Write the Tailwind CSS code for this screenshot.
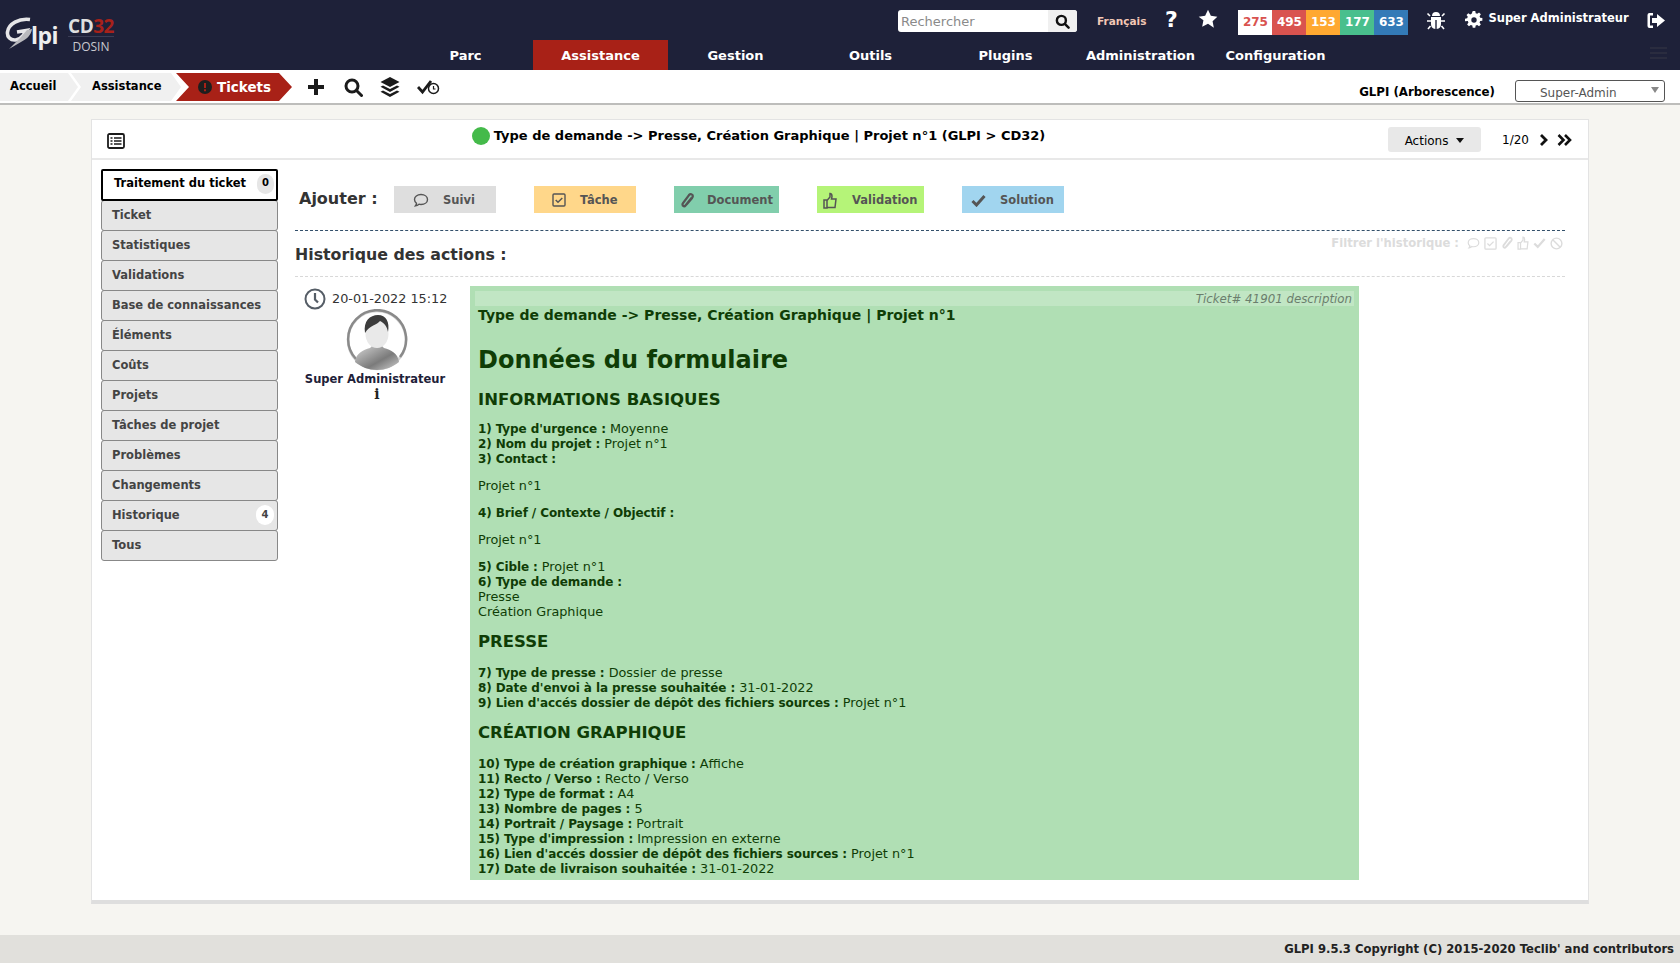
<!DOCTYPE html>
<html lang="fr">
<head>
    <meta charset="UTF-8">
    <title>Ticket - GLPI</title>
    <script src="https://cdn.jsdelivr.net/npm/@tailwindcss/browser@4"></script>
</head>
<body class="bg-[#f6f5f1] font-['DejaVu_Sans',sans-serif] text-[13px] text-black h-[963px] w-[1680px] overflow-hidden flex flex-col">

    <!-- top bar -->
    <header class="h-[70px] bg-[#1e2139] flex shrink-0 text-white">
        <div class="w-[398px] flex items-start pl-[5px] pt-[17px] gap-[10px]">
            <div class="relative w-[53px] h-[32px]">
                <svg class="absolute left-0 top-0" width="30" height="32" viewBox="0 0 30 32" fill="none"><path d="M25 2.500C14 1 3.500 7 2.500 15c-.6 5 3 8.500 8 8 3-.3 5.500-2 7.500-4.500l3.500-5-9.500 1.500" stroke="#e6e6e8" stroke-width="3.600"/><path d="M16 20l6-7 5-1c-1 6-5 10-11 13L4 32l7-7z" fill="#b9b9bd"/></svg>
                <span class="absolute left-[26px] top-[3px] text-[23px] leading-[30px] font-['Open_Sans',sans-serif] font-bold tracking-[-0.5px] text-[#eeeeee]">lpi</span>
            </div>
            <div class="w-[46px] text-center">
                <div class="text-[19px] leading-[18px] font-['Open_Sans',sans-serif] font-bold tracking-[-0.5px] border-b border-[#3a3d55] pb-[1px]"><span class="text-[#dfdfdf]">CD</span><span class="text-[#a8211a]">32</span></div>
                <div class="text-[12px] leading-[14px] mt-[3px] font-['Open_Sans',sans-serif] text-[#c9c9cf]">DOSIN</div>
            </div>
        </div>
        <div class="flex-1 flex flex-col">
            <div class="h-[40px] flex items-start pt-[10px] pl-[500px] relative">
                <div class="w-[179px] h-[22px] bg-white rounded-[3px] flex overflow-hidden">
                    <span class="flex-1 pl-[3px] text-[13px] leading-[24px] text-[#8a8a8a]">Rechercher</span>
                    <span class="w-[29px] bg-[#f0f0f0] flex items-center justify-center">
                        <svg width="15" height="15" viewBox="0 0 16 16" fill="none" stroke="#111" stroke-width="2.6"><circle cx="6.8" cy="6.8" r="4.8"/><path d="M10.5 10.500l4 4" stroke-linecap="round"/></svg>
                    </span>
                </div>
                <span class="ml-[20px] mt-[4px] text-[10.5px] leading-[14px] font-bold text-[#f3c7b5]">Français</span>
                <span class="ml-[18px] -mt-[3px] text-[22px] leading-[26px] font-bold w-[14px] text-center">?</span>
                <svg class="ml-[20px] -mt-[1px]" width="20" height="20" viewBox="0 0 24 24" fill="#fff"><path d="M12 1l3.400 7.200 7.800 1-5.700 5.400 1.500 7.800L12 17.600l-7 3.800 1.500-7.800L.8 9.200l7.800-1z"/></svg>
                <div class="ml-[20px] flex h-[25px] text-[12px] font-bold leading-[25px] text-center">
                    <span class="w-[34px] bg-white text-[#d9534f]">275</span>
                    <span class="w-[34px] bg-[#d9534f]">495</span>
                    <span class="w-[34px] bg-[#ffa831]">153</span>
                    <span class="w-[34px] bg-[#49bf8d]">177</span>
                    <span class="w-[34px] bg-[#337ab7]">633</span>
                </div>
                <svg class="ml-[18px] mt-[1px]" width="20" height="20" viewBox="0 0 20 20" fill="#fff"><path d="M6 5a4 4 0 0 1 8 0zM5 6h10v7a5 5 0 0 1-4.300 5V9h-1.400v9A5 5 0 0 1 5 13z"/><path d="M4 5L1.500 2.500M16 5l2.500-2.500M1 10h4M15 10h4M4.500 15L2 18M15.500 15L18 18" stroke="#fff" stroke-width="1.600"/></svg>
                <svg class="ml-[19px] mt-[1px]" width="18" height="18" viewBox="0 0 20 20"><path d="M8.600 0h2.800l.5 2.400 1.700.7 2-1.400 2 2-1.400 2 .7 1.700 2.400.5v2.800l-2.400.5-.7 1.700 1.400 2-2 2-2-1.400-1.700.7-.5 2.400H8.600l-.5-2.400-1.700-.7-2 1.400-2-2 1.400-2-.7-1.700L0 11.400V8.600l2.400-.5.7-1.700-1.400-2 2-2 2 1.400 1.700-.7z" fill="#fff"/><circle cx="10" cy="10" r="3" fill="#1e2139"/></svg>
                <span class="ml-[5px] text-[11.5px] leading-[16px] font-bold whitespace-nowrap">Super Administrateur</span>
                <svg class="ml-[18px] mt-[2px]" width="18" height="17" viewBox="0 0 18 17" fill="#fff"><path d="M6 1H2.500A2 2 0 0 0 .5 3v11a2 2 0 0 0 2 2H6v-2.500H3v-10h3z"/><path d="M10 2l8 6.500-8 6.500v-4H5V6h5z"/></svg>
            </div>
            <nav class="flex h-[30px] text-[13px] font-bold leading-[32px] text-center">
                <a class="w-[135px]">Parc</a>
                <a class="w-[135px] bg-[#a82117]">Assistance</a>
                <a class="w-[135px]">Gestion</a>
                <a class="w-[135px]">Outils</a>
                <a class="w-[135px]">Plugins</a>
                <a class="w-[135px]">Administration</a>
                <a class="w-[135px]">Configuration</a>
                <span class="ml-[307px] mt-[7px] flex flex-col gap-[3px] w-[17px] h-fit">
                    <i class="h-[2px] bg-[#2a2c3f]"></i><i class="h-[2px] bg-[#2a2c3f]"></i><i class="h-[2px] bg-[#2a2c3f]"></i>
                </span>
            </nav>
        </div>
    </header>

    <!-- breadcrumb -->
    <div class="h-[35px] bg-white border-b-2 border-[#bdbdbb] shrink-0 flex items-start pt-[3px] relative">
        <div class="flex h-[28px] leading-[26px] font-bold text-[11.5px]">
            <a class="w-[78px] pl-[10px] bg-[#f0f0f0] [clip-path:polygon(0_0,68px_0,78px_50%,68px_100%,0_100%)]">Accueil</a>
            <a class="w-[110px] -ml-[7px] pl-[21px] bg-[#f0f0f0] [clip-path:polygon(0_0,100px_0,110px_50%,100px_100%,0_100%,10px_50%)]">Assistance</a>
            <a class="w-[116px] -ml-[5px] pl-[22px] flex items-center gap-[5px] bg-[#a82117] text-white text-[13.5px] [clip-path:polygon(0_0,103px_0,116px_50%,103px_100%,0_100%,13px_50%)]">
                <svg width="14" height="14" viewBox="0 0 14 14"><circle cx="7" cy="7" r="7" fill="#1e1e1e"/><path d="M6 3h2v5H6zM6 9.200h2v2H6z" fill="#a82117"/></svg>
                Tickets
            </a>
        </div>
        <div class="flex items-center h-[28px] ml-[15px] gap-[17px]">
            <svg width="18" height="18" viewBox="0 0 18 18" fill="#1b1b1b"><path d="M7 1h4v6h6v4h-6v6H7v-6H1V7h6z"/></svg>
            <svg class="ml-[2px]" width="19" height="19" viewBox="0 0 19 19" fill="none" stroke="#1b1b1b" stroke-width="3"><circle cx="8" cy="8" r="6"/><path d="M12.500 12.500l5 5" stroke-linecap="round"/></svg>
            <svg width="20" height="20" viewBox="0 0 20 20" fill="#1b1b1b"><path d="M10 0l9.500 5L10 10 .5 5z"/><path d="M3 8.500L10 12l7-3.500 2.500 1.300L10 15 .5 9.800z"/><path d="M3 13.500L10 17l7-3.500 2.500 1.300L10 20 .5 14.800z"/></svg>
            <svg width="23" height="16" viewBox="0 0 23 16" fill="none" stroke="#1b1b1b"><path d="M1 8l4.500 5L14 2" stroke-width="2.800"/><circle cx="16.500" cy="9.500" r="5" stroke-width="1.500"/><path d="M16.500 7v3h2" stroke-width="1.200"/></svg>
        </div>
        <span class="ml-auto mr-[20px] mt-[11px] text-[11.8px] leading-[16px] font-bold">GLPI (Arborescence)</span>
        <div class="mr-[15px] mt-[7px] w-[150px] h-[22px] border border-[#555] rounded-[3px] bg-white flex items-start relative">
            <span class="pl-[24px] text-[12px] leading-[24px] text-[#555]">Super-Admin</span>
            <span class="absolute right-[5px] top-[6px] w-0 h-0 border-x-[4px] border-x-transparent border-t-[6px] border-t-[#888]"></span>
        </div>
    </div>

    <!-- ticket card -->
    <main class="mx-[91px] mt-[14px] h-[785px] bg-white border border-[#e3e3e3] border-b-[4px] border-b-[#dedede] shrink-0 flex flex-col">
        <div class="h-[40px] border-b-2 border-[#e8e8e8] flex items-start relative shrink-0">
            <svg class="ml-[15px] mt-[13px]" width="18" height="16" viewBox="0 0 18 16" fill="none" stroke="#1b1b1b"><rect x="1" y="1" width="16" height="14" rx="1.500" stroke-width="1.800"/><path d="M3.500 5h2M3.500 8h2M3.500 11h2M7 5h7.500M7 8h7.500M7 11h7.500" stroke-width="1.300"/></svg>
            <div class="flex-1 flex justify-center items-center gap-[4px] pt-[7px] pl-[4px] font-bold text-[13px] leading-[18px]">
                <span class="w-[18px] h-[18px] rounded-full bg-[#44ba4a]"></span>
                <span>Type de demande -&gt; Presse, Création Graphique | Projet n°1 (GLPI &gt; CD32)</span>
            </div>
            <div class="mt-[7px] w-[93px] h-[25px] bg-[#e8e8e8] rounded-[3px] text-[12px] leading-[29px] flex items-start justify-center gap-[8px]">
                Actions <span class="mt-[11px] w-0 h-0 border-x-[4px] border-x-transparent border-t-[5px] border-t-[#111]"></span>
            </div>
            <span class="ml-[21px] mt-[12px] text-[12px] leading-[16px]">1/20</span>
            <div class="flex items-center mt-[14px] ml-[10px] gap-[8px] mr-[16px]">
                <svg width="10" height="12" viewBox="0 0 10 12" fill="none" stroke="#111" stroke-width="2.800"><path d="M2 1l5 5-5 5"/></svg>
                <svg width="15" height="12" viewBox="0 0 15 12" fill="none" stroke="#111" stroke-width="2.600"><path d="M1.500 1l5 5-5 5M8 1l5 5-5 5"/></svg>
            </div>
        </div>

        <div class="flex flex-1">
            <!-- tabs -->
            <ul class="w-[177px] ml-[9px] mt-[9px] font-bold text-[11.5px] text-[#444] shrink-0">
                <li class="h-[32px] border-2 border-black rounded-[2px] bg-white text-black pl-[11px] leading-[25px] flex items-start justify-between pr-[2px] relative">Traitement du ticket <span class="mt-[3px] w-[17px] h-[20px] rounded-full bg-[#e6e6e6] text-[10px] leading-[18px] text-center">0</span></li>
                <li class="h-[31px] -mt-[1px] border border-[#888] rounded-[3px] bg-[#e6e6e6] pl-[10px] leading-[28px]">Ticket</li>
                <li class="h-[31px] -mt-[1px] border border-[#888] rounded-[3px] bg-[#e6e6e6] pl-[10px] leading-[28px]">Statistiques</li>
                <li class="h-[31px] -mt-[1px] border border-[#888] rounded-[3px] bg-[#e6e6e6] pl-[10px] leading-[28px]">Validations</li>
                <li class="h-[31px] -mt-[1px] border border-[#888] rounded-[3px] bg-[#e6e6e6] pl-[10px] leading-[28px]">Base de connaissances</li>
                <li class="h-[31px] -mt-[1px] border border-[#888] rounded-[3px] bg-[#e6e6e6] pl-[10px] leading-[28px]">Éléments</li>
                <li class="h-[31px] -mt-[1px] border border-[#888] rounded-[3px] bg-[#e6e6e6] pl-[10px] leading-[28px]">Coûts</li>
                <li class="h-[31px] -mt-[1px] border border-[#888] rounded-[3px] bg-[#e6e6e6] pl-[10px] leading-[28px]">Projets</li>
                <li class="h-[31px] -mt-[1px] border border-[#888] rounded-[3px] bg-[#e6e6e6] pl-[10px] leading-[28px]">Tâches de projet</li>
                <li class="h-[31px] -mt-[1px] border border-[#888] rounded-[3px] bg-[#e6e6e6] pl-[10px] leading-[28px]">Problèmes</li>
                <li class="h-[31px] -mt-[1px] border border-[#888] rounded-[3px] bg-[#e6e6e6] pl-[10px] leading-[28px]">Changements</li>
                <li class="h-[31px] -mt-[1px] border border-[#888] rounded-[3px] bg-[#e6e6e6] pl-[10px] leading-[28px] flex justify-between pr-[3px]">Historique <span class="mt-[4px] w-[18px] h-[20px] rounded-full bg-white text-[10px] leading-[19px] text-center">4</span></li>
                <li class="h-[31px] -mt-[1px] border border-[#888] rounded-[3px] bg-[#e6e6e6] pl-[10px] leading-[28px]">Tous</li>
            </ul>

            <div class="w-[1270px] ml-[17px]">
                <!-- add bar -->
                <div class="h-[71px] pt-[26px] border-b border-dashed border-[#33506b] flex items-start">
                    <span class="ml-[4px] w-[95px] font-bold text-[16px] leading-[26px] text-[#333]">Ajouter :</span>
                    <div class="flex font-bold text-[11.5px] text-[#555] leading-[27px]">
                        <a class="w-[102px] h-[27px] pt-[1px] bg-[#dedede] flex items-center pl-[19px] gap-[14px]">
                            <svg width="16" height="15" viewBox="0 0 16 15" fill="none" stroke="#555" stroke-width="1.400"><path d="M8 1.500c3.800 0 6.500 2.200 6.500 5s-2.700 5-6.500 5c-.8 0-1.500-.1-2-.3-1 .9-2.300 1.500-3.500 1.600.7-.8 1-1.700 1-2.500C2.400 9.400 1.500 8 1.500 6.500c0-2.800 2.700-5 6.500-5z"/></svg>
                            Suivi
                        </a>
                        <a class="ml-[38px] w-[102px] h-[27px] pt-[1px] bg-[#ffd78a] flex items-center pl-[18px] gap-[14px]">
                            <svg width="14" height="14" viewBox="0 0 14 14" fill="none" stroke="#555"><rect x="1" y="1" width="12" height="12" rx="1" stroke-width="1.400"/><path d="M3.700 7l2.300 2.300 4.300-4.300" stroke-width="1.500"/></svg>
                            Tâche
                        </a>
                        <a class="ml-[38px] w-[105px] h-[27px] pt-[1px] bg-[#81ceac] flex items-center pl-[6px] gap-[13px]">
                            <svg width="14" height="17" viewBox="0 0 14 17" fill="none" stroke="#555" stroke-width="2.300"><path d="M11.500 6l-6 7.500c-1 1.300-3 .8-3-1 0-.5.2-1 .5-1.400l6-8c1.300-1.600 3.800-1 3.800 1 0 .7-.3 1.300-.7 1.800L6.500 12.500"/></svg>
                            Document
                        </a>
                        <a class="ml-[38px] w-[107px] h-[27px] pt-[1px] bg-[#b5f478] flex items-center pl-[6px] gap-[15px]">
                            <svg width="14" height="17" viewBox="0 0 14 17" fill="none" stroke="#555" stroke-width="1.500"><path d="M1 8h3v8H1zM4 8.500l3-3.500V1.500c1.500 0 2 1.500 2 3L8.500 7H13l-1 8.500H4"/></svg>
                            Validation
                        </a>
                        <a class="ml-[38px] w-[102px] h-[27px] pt-[1px] bg-[#a1d5ef] flex items-center pl-[9px] gap-[14px]">
                            <svg width="15" height="13" viewBox="0 0 15 13" fill="none" stroke="#555" stroke-width="3"><path d="M1.500 7l4 4 8-9"/></svg>
                            Solution
                        </a>
                    </div>
                </div>

                <!-- history header -->
                <div class="h-[46px] border-b border-dashed border-[#d8d8d8] relative">
                    <h2 class="pt-[14px] font-bold text-[15.8px] leading-[20px] text-[#333]">Historique des actions :</h2>
                    <div class="absolute right-[2px] top-[4px] flex items-center gap-[4px] font-bold text-[11.6px] leading-[16px] text-[#dcdcdc]">
                        <span class="mr-[4px]">Filtrer l'historique :</span>
                        <svg width="13" height="13" viewBox="0 0 16 15" fill="none" stroke="#dcdcdc" stroke-width="1.500"><path d="M8 1.500c3.800 0 6.500 2.200 6.500 5s-2.700 5-6.500 5c-.8 0-1.500-.1-2-.3-1 .9-2.300 1.500-3.500 1.600.7-.8 1-1.700 1-2.500C2.400 9.400 1.500 8 1.500 6.500c0-2.800 2.700-5 6.500-5z"/></svg>
                        <svg width="13" height="13" viewBox="0 0 14 14" fill="none" stroke="#dcdcdc" stroke-width="1.400"><rect x="1" y="1" width="12" height="12" rx="1"/><path d="M3.700 7l2.300 2.300 4.300-4.300"/></svg>
                        <svg width="12" height="14" viewBox="0 0 14 17" fill="none" stroke="#dcdcdc" stroke-width="2.200"><path d="M11.500 6l-6 7.500c-1 1.300-3 .8-3-1 0-.5.2-1 .5-1.400l6-8c1.300-1.600 3.800-1 3.800 1 0 .7-.3 1.300-.7 1.800L6.500 12.500"/></svg>
                        <svg width="12" height="14" viewBox="0 0 14 17" fill="none" stroke="#dcdcdc" stroke-width="1.500"><path d="M1 8h3v8H1zM4 8.500l3-3.500V1.500c1.500 0 2 1.500 2 3L8.500 7H13l-1 8.500H4"/></svg>
                        <svg width="13" height="12" viewBox="0 0 15 13" fill="none" stroke="#dcdcdc" stroke-width="2.600"><path d="M1.500 7l4 4 8-9"/></svg>
                        <svg width="13" height="13" viewBox="0 0 14 14" fill="none" stroke="#dcdcdc" stroke-width="1.500"><circle cx="7" cy="7" r="5.800"/><path d="M3 3l8 8"/></svg>
                    </div>
                </div>

                <!-- description -->
                <div class="flex mt-[9px]">
                    <div class="w-[175px] shrink-0 flex flex-col items-center pr-[11px]">
                        <div class="mt-[2px] flex items-center gap-[6px] text-[12.8px] leading-[22px] text-[#333] self-start pl-[9px]">
                            <svg width="22" height="22" viewBox="0 0 22 22" fill="none" stroke="#555d66" stroke-width="2"><circle cx="11" cy="11" r="9.500"/><path d="M11 5v6.500l3 3" stroke-width="2.200"/></svg>
                            20-01-2022 15:12
                        </div>
                        <svg class="-mt-[1px]" width="62" height="62" viewBox="0 0 62 62">
                            <defs>
                                <linearGradient id="bust" x1="0" y1="0" x2="1" y2="1"><stop offset="0" stop-color="#d8d8d8"/><stop offset=".6" stop-color="#7b7b7b"/><stop offset="1" stop-color="#cfcfcf"/></linearGradient>
                            </defs>
                            <circle cx="31" cy="31" r="29" fill="#fff" stroke="#d4d4d4" stroke-width="2.500"/>
                            <path d="M54 48A29 29 0 1 0 10 50" fill="none" stroke="#8a8a8a" stroke-width="2.500"/>
                            <path d="M9 53c1-9 8-12 15-14l3-3h8l3 3c7 2 14 5 15 14-6 5-14 8-22 8s-16-3-22-8z" fill="url(#bust)"/>
                            <ellipse cx="31" cy="25" rx="11.500" ry="14" fill="#e9e9e9"/>
                            <path d="M19 24c-2-12 5-18 13-18 8 0 12 7 10 17-1-6-4-9-8-11-3 4-10 4-15 12z" fill="#3c3c3c"/>
                        </svg>
                        <div class="pt-[1px] text-[11.5px] leading-[15px] font-bold text-[#1e2139] text-center pr-[4px] whitespace-nowrap">Super Administrateur</div>
                        <div class="text-[14px] leading-[15px] font-bold font-['DejaVu_Serif',serif] text-[#222]">i</div>
                    </div>

                    <article class="w-[889px] h-[594px] bg-[#b0dfb4] text-[#0f3d06] p-[5px] text-[12.8px] leading-[15px]">
                        <div class="h-[15px] bg-[#c1e6c4] text-right pr-[2px] italic text-[11.8px] leading-[16px] text-[#6b7e6d]">Ticket# 41901 description</div>
                        <div class="px-[3px] [&_b]:text-[12px] [&_b]:tracking-[-0.1px] [&_b]:leading-[0]">
                            <p class="font-bold text-[14px] leading-[18px] mb-[19px]">Type de demande -&gt; Presse, Création Graphique | Projet n°1</p>
                            <h1 class="font-bold text-[24px] leading-[34px] mb-[12px]">Données du formulaire</h1>
                            <h3 class="font-bold text-[16.5px] leading-[22px] mb-[10px]">INFORMATIONS BASIQUES</h3>
                            <p><b>1) Type d'urgence :</b> Moyenne<br><b>2) Nom du projet :</b> Projet n°1<br><b>3) Contact :</b></p>
                            <p class="mt-[12px]">Projet n°1</p>
                            <p class="mt-[12px]"><b>4) Brief / Contexte / Objectif :</b></p>
                            <p class="mt-[12px]">Projet n°1</p>
                            <p class="mt-[12px]"><b>5) Cible :</b> Projet n°1<br><b>6) Type de demande :</b><br>Presse<br>Création Graphique</p>
                            <h3 class="font-bold text-[16.5px] leading-[22px] mt-[12px] mb-[12px]">PRESSE</h3>
                            <p><b>7) Type de presse :</b> Dossier de presse<br><b>8) Date d'envoi à la presse souhaitée :</b> 31-01-2022<br><b>9) Lien d'accés dossier de dépôt des fichiers sources :</b> Projet n°1</p>
                            <h3 class="font-bold text-[16.5px] leading-[22px] mt-[12px] mb-[12px]">CRÉATION GRAPHIQUE</h3>
                            <p><b>10) Type de création graphique :</b> Affiche<br><b>11) Recto / Verso :</b> Recto / Verso<br><b>12) Type de format :</b> A4<br><b>13) Nombre de pages :</b> 5<br><b>14) Portrait / Paysage :</b> Portrait<br><b>15) Type d'impression :</b> Impression en externe<br><b>16) Lien d'accés dossier de dépôt des fichiers sources :</b> Projet n°1<br><b>17) Date de livraison souhaitée :</b> 31-01-2022</p>
                        </div>
                    </article>
                </div>
            </div>
        </div>
    </main>

    <footer class="mt-auto h-[28px] bg-[#e1e0dc] text-right pr-[6px] text-[11.6px] leading-[28px] font-bold text-[#222] shrink-0">GLPI 9.5.3 Copyright (C) 2015-2020 Teclib' and contributors</footer>
</body>
</html>
